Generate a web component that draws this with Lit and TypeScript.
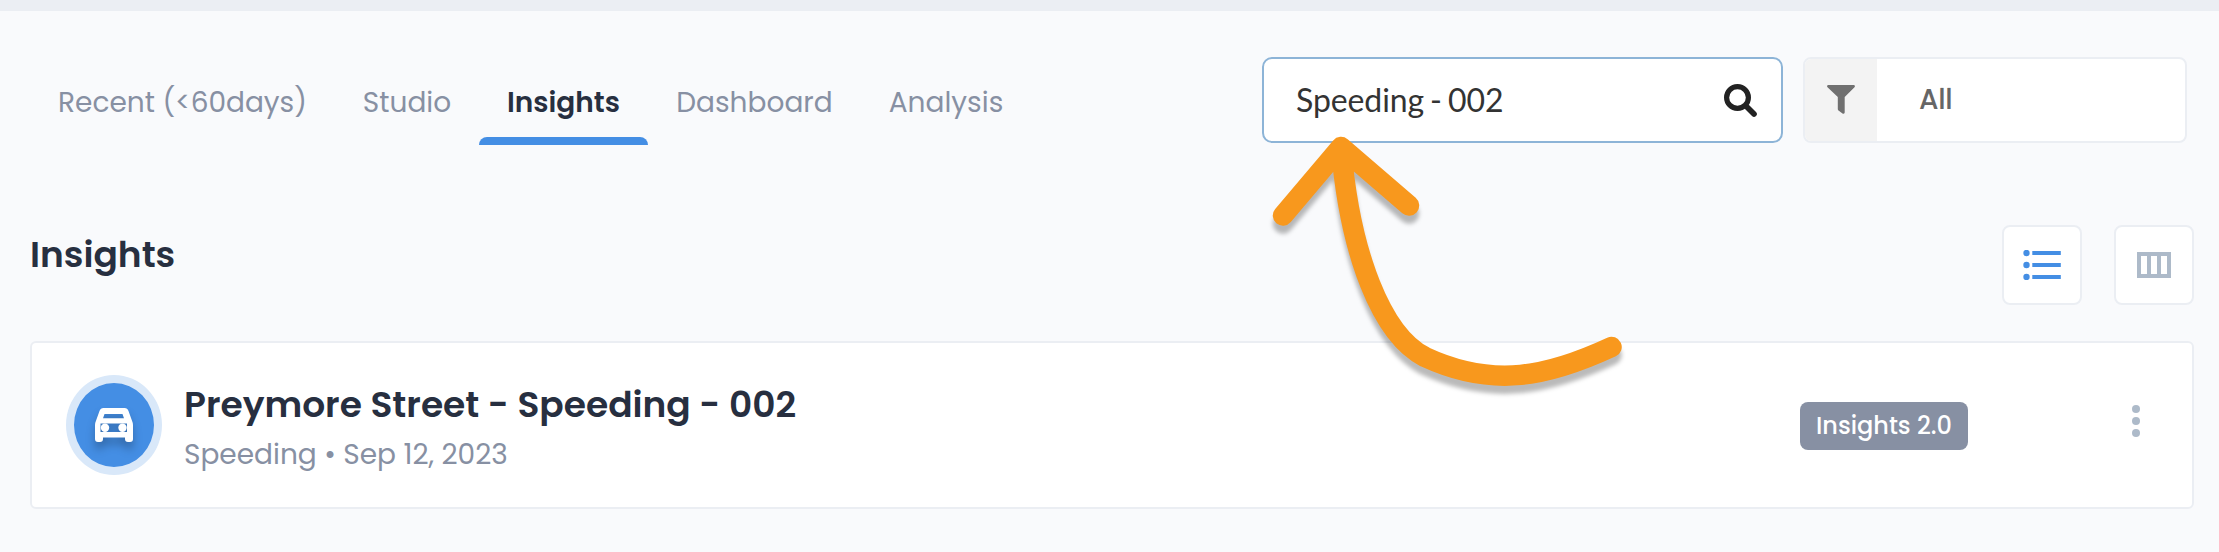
import { LitElement, html, css, svg } from "lit";
import { customElement } from "lit/decorators.js";

const carIcon = html`<svg class="car" width="38" height="34" viewBox="0 0 38 34" fill="#fff">
  <path fill-rule="evenodd" d="M8.500 0h21q3 0 4 3l3.600 10q.9 2 .9 4v14q0 3-3 3h-2q-3 0-3-3v-1.500H8V31q0 3-3 3H3q-3 0-3-3V17q0-2 .9-4L4.500 3q1-3 4-3ZM9.500 6L8 10.300H29L27.500 6ZM5.500 15.500V24H32V15.500Z"/>
  <circle cx="10" cy="19.700" r="4.200"/><circle cx="27.500" cy="19.700" r="4.200"/>
</svg>`;

@customElement("app-root")
export class AppRoot extends LitElement {
  static styles = css`
    :host { display: block; font-family: Poppins, Inter, sans-serif; color: #272f40; }
    * { box-sizing: border-box; }
    .page { position: relative; height: 552px; background: #f9fafc; border-top: 11px solid #ebeef3; padding: 46px 25px 0 30px; overflow: hidden; white-space: nowrap; }
    .toolbar { display: flex; height: 86px; }
    .tabs { display: flex; height: 88px; flex: 1; }
    .tab { display: flex; justify-content: center; font-size: 28px; line-height: 34px; padding-top: 29px; color: #8790a3; }
    .recent { width: 304px; padding-left: 1px; }
    .studio { width: 145px; padding-left: 1px; }
    .current { display: grid; grid-template: 51px 8px / 1fr; justify-content: stretch; width: 169px; font-weight: 600; color: #272f40; text-align: center; }
    .current::after { content: ""; background: #448ee4; border-radius: 8px 8px 0 0; }
    .dashboard { width: 213px; }
    .analysis { width: 170px; }
    .search { display: flex; align-items: center; justify-content: space-between; width: 521px; border: 2px solid #8db4d7; border-radius: 10px; background: #fff; padding: 0 24px 0 32px; font: 32px/38px Lato, sans-serif; color: #333; word-spacing: -2px; letter-spacing: -.1px; }
    .search svg { margin-top: 1px; }
    .filter { display: flex; width: 384px; margin: 0 7px 0 20px; border: 2px solid #ebeef3; border-radius: 8px; background: #fff; overflow: hidden; }
    .funnel { display: flex; width: 72px; background: #f3f3f3; padding: 26px 0 0 22px; }
    .choice { font-size: 28px; line-height: 34px; font-weight: 500; color: #666; padding: 24px 0 0 42px; letter-spacing: -.3px; }
    .heading { display: flex; justify-content: space-between; height: 80px; margin-top: 82px; }
    h1 { font-size: 36px; line-height: 44px; font-weight: 600; margin: 8px 0 0; }
    .views { display: flex; gap: 32px; }
    .view { display: flex; align-items: center; justify-content: center; width: 80px; height: 80px; border: 2px solid #ebeef3; border-radius: 8px; background: #fff; }
    .card { display: flex; height: 168px; margin-top: 36px; border: 2px solid #ebeef3; border-radius: 6px; background: #fff; }
    .avatar { display: grid; place-items: center; width: 96px; height: 100px; margin: 32px 0 0 34px; background: #448ee4; border: 8px solid #d9e8f9; border-radius: 50%; }
    .car { filter: drop-shadow(0 7px 4px rgba(0, 0, 0, .25)); }
    .details { flex: 1; padding: 40px 0 0 22px; }
    .title { font-size: 36px; line-height: 44px; font-weight: 600; }
    .sub { font-size: 28px; line-height: 34px; color: #8790a3; margin-top: 11px; }
    .badge { width: 168px; height: 48px; margin: 59px 164px 0 0; border-radius: 8px; background: #8790a3; color: #fff; font-size: 24px; line-height: 47px; font-weight: 500; text-align: center; }
    .more { margin: 62px 52px 0 0; }
    .arrow { position: absolute; left: 1260px; top: 119px; filter: drop-shadow(0 8px 2px rgba(0, 0, 0, .27)); }
  `;

  render() {
    return html`<div class="page">
      <div class="toolbar">
        <nav class="tabs">
          <div class="tab recent"><span>Recent (&lt;60days)</span></div>
          <div class="tab studio"><span>Studio</span></div>
          <div class="tab current"><span>Insights</span></div>
          <div class="tab dashboard"><span>Dashboard</span></div>
          <div class="tab analysis"><span>Analysis</span></div>
        </nav>
        <div class="search"><span>Speeding - 002</span>
          <svg width="33" height="33" viewBox="0 0 33 33" fill="none" stroke="#222"><circle cx="13.500" cy="13.500" r="10.900" stroke-width="5.200"/><path d="M23.500 23.500L30 30" stroke-width="5.600" stroke-linecap="round"/></svg>
        </div>
        <div class="filter">
          <div class="funnel"><svg width="28" height="29" viewBox="0 0 28 29" fill="#707070"><path d="M1 0H27Q28.600 .8 27.500 2.300L17.700 12V27.500Q17.300 29.300 15.500 28.500L11.500 25.500Q10.800 25 10.800 24V12L.5 2.300Q-.6 .8 1 0Z"/></svg></div>
          <div class="choice">All</div>
        </div>
      </div>
      <div class="heading">
        <h1>Insights</h1>
        <div class="views">
          <div class="view"><svg width="38" height="30" viewBox="0 0 38 30" fill="#448ee4">${[3, 15, 27].map(y => svg`<circle cx="3.500" cy=${y} r="3.200"/><rect x="9.300" y=${y - 2} width="28.500" height="4"/>`)}</svg></div>
          <div class="view"><svg width="34" height="26" viewBox="0 0 34 26"><path fill="#adbac9" fill-rule="evenodd" d="M0 0H34V26H0ZM4 4V22H10V4ZM14 4V22H20V4ZM24 4V22H30V4Z"/></svg></div>
        </div>
      </div>
      <div class="card">
        <div class="avatar">${carIcon}</div>
        <div class="details">
          <div class="title">Preymore Street - Speeding - 002</div>
          <div class="sub">Speeding • Sep 12, 2023</div>
        </div>
        <div class="badge">Insights 2.0</div>
        <svg class="more" width="8" height="32" viewBox="0 0 8 32" fill="#adbac9"><circle cx="4" cy="4" r="4"/><circle cx="4" cy="16" r="4"/><circle cx="4" cy="28" r="4"/></svg>
      </div>
      <svg class="arrow" width="370" height="270" viewBox="1260 130 370 270" fill="none" stroke="#f8981d" stroke-width="20.500" stroke-linecap="round" stroke-linejoin="round"><path d="M1283 215.500L1341 147L1409 205.500M1341 147C1350 255 1382 335 1425 357C1494 389 1549 376 1611.500 347"/></svg>
    </div>`;
  }
}
